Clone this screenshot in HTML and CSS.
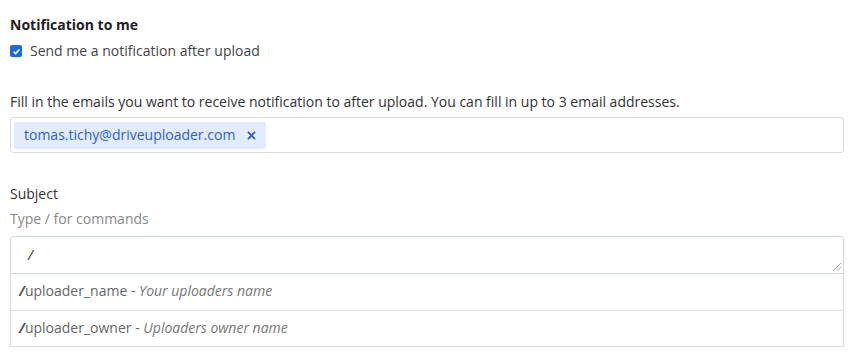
FILE: index.html
```html
<!DOCTYPE html>
<html>
<head>
<meta charset="utf-8">
<link rel="stylesheet" href="styles.css">
</head>
<body>
<div class="page">
  <section class="group">
    <div class="heading">Notification to me</div>
    <label class="check">
      <span class="box"><svg viewBox="0 0 12 12" width="9" height="9"><path d="M2.2 6.3 L4.8 8.8 L9.8 3.4" fill="none" stroke="#fff" stroke-width="2"/></svg></span>
      <span>Send me a notification after upload</span>
    </label>
  </section>

  <section class="group emails">
    <div class="help">Fill in the emails you want to receive notification to after upload. You can fill in up to 3 email addresses.</div>
    <div class="tagbox">
      <span class="tag">tomas.tichy@driveuploader.com <svg class="x" viewBox="0 0 10 10" width="9" height="9"><path d="M1 1 L9 9 M9 1 L1 9" stroke="#2a62c9" stroke-width="2" fill="none"/></svg></span>
    </div>
  </section>

  <section class="group subject">
    <div class="label">Subject</div>
    <div class="hint">Type / for commands</div>
    <div class="editor">
      <div class="textarea"><span class="slash">/</span><span class="grip"></span></div>
      <ul class="menu">
        <li><b>/</b>uploader_name - <i>Your uploaders name</i></li>
        <li><b>/</b>uploader_owner - <i>Uploaders owner name</i></li>
      </ul>
    </div>
  </section>
</div>
</body>
</html>
```

FILE: styles.css
```css
html, body {
  margin: 0;
  padding: 0;
  background: #fff;
}
body {
  font-family: "Open Sans", "Noto Sans", sans-serif;
  font-size: 14px;
  line-height: 20px;
  color: #333;
}
.page {
  padding: 15px 16px 0 10px;
}
.heading {
  font-weight: 700;
  color: #222;
}
.check {
  display: flex;
  align-items: center;
  gap: 8px;
  margin-top: 6px;
  color: #444;
}
.box {
  width: 12px;
  height: 12px;
  border-radius: 2px;
  background: #1a6de0;
  display: flex;
  align-items: center;
  justify-content: center;
}
.emails {
  margin-top: 31px;
}
.help {
  color: #333;
}
.tagbox {
  margin-top: 5px;
  border: 1px solid #dcdcdc;
  border-radius: 3px;
  height: 36px;
  padding: 3px;
  box-sizing: border-box;
  display: flex;
  align-items: center;
}
.tag {
  background: #e2ecfc;
  color: #2a62c9;
  border-radius: 3px;
  height: 27px;
  display: flex;
  align-items: center;
  padding: 0 10px;
  gap: 12px;
}
.subject {
  margin-top: 31px;
}
.label {
  color: #333;
}
.hint {
  color: #888;
  margin-top: 5px;
}
.editor {
  margin-top: 7px;
  box-shadow: 0 1px 3px rgba(0,0,0,0.08);
}
.textarea {
  position: relative;
  height: 38px;
  box-sizing: border-box;
  border: 1px solid #cfd8e6;
  border-radius: 3px 3px 0 0;
  padding: 8px 17px;
}
.slash {
  font-style: italic;
  color: #333;
}
.grip {
  position: absolute;
  right: 2px;
  bottom: 2px;
  width: 8px;
  height: 8px;
  background: linear-gradient(135deg, transparent 45%, #aaa 45%, #aaa 52%, transparent 52%, transparent 70%, #aaa 70%, #aaa 77%, transparent 77%);
}
.menu {
  list-style: none;
  margin: 0;
  padding: 0;
  border: 1px solid #dedede;
  border-top: none;
}
.menu li {
  height: 36px;
  box-sizing: border-box;
  padding: 7px 8px;
  color: #666;
}
.menu li + li {
  border-top: 1px solid #e2e2e2;
}
.menu b {
  font-weight: 700;
  color: #555;
  font-style: italic;
}
.menu i {
  color: #777;
}
```
